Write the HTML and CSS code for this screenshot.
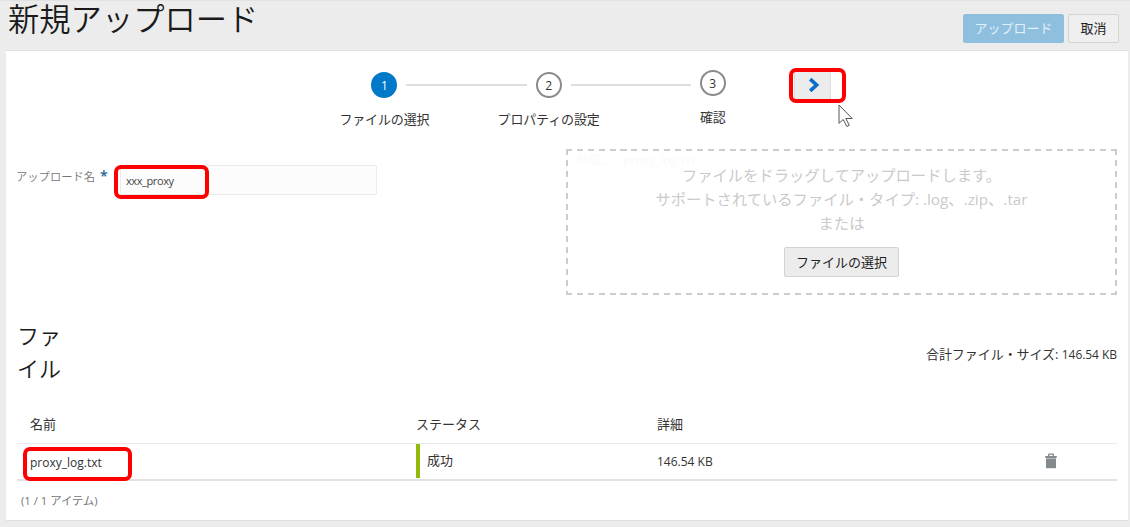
FILE: index.html
```html
<!DOCTYPE html>
<html lang="ja">
<head>
  <meta charset="UTF-8">
  <title>新規アップロード</title>
  <link rel="stylesheet" href="styles.css">
</head>
<body>

  <!-- Header -->
  <header class="header">
    <h1>新規アップロード</h1>
    <div class="actions">
      <button class="btn btn-primary" disabled>アップロード</button>
      <button class="btn btn-cancel">取消</button>
    </div>
  </header>

  <main class="panel">

    <!-- Steps -->
    <div class="train">
      <div class="step active">
        <span class="circle">1</span>
        <span class="step-label">ファイルの選択</span>
      </div>
      <div class="line"></div>
      <div class="step">
        <span class="circle">2</span>
        <span class="step-label">プロパティの設定</span>
      </div>
      <div class="line"></div>
      <div class="step last">
        <span class="circle">3</span>
        <span class="step-label">確認</span>
      </div>
      <div class="next-wrap">
        <button class="next">
          <svg width="12" height="16" viewBox="0 0 12 16"><path d="M2.2 2.2L8.6 8l-6.4 5.8" fill="none" stroke="#0b6fca" stroke-width="3.6"/></svg>
        </button>
        <span class="mark mark-next"></span>
        <svg class="cursor" width="16" height="24" viewBox="0 0 16 24"><path d="M1 1v18.3l4.2-3.8 3.7 7 2.4-1.2-3.5-6.8h6.4z" fill="#fff" stroke="#555" stroke-width="1"/></svg>
      </div>
    </div>

    <!-- Name and drop zone -->
    <div class="form-row">
      <div class="field">
        <label for="upload-name">アップロード名</label>
        <span class="required">*</span>
        <div class="input-wrap">
          <input type="text" id="upload-name" value="xxx_proxy">
          <span class="mark mark-input"></span>
        </div>
      </div>
      <div class="dropzone">
        <div class="native-file"><span>参照...</span><span>proxy_log.txt</span></div>
        <p>ファイルをドラッグしてアップロードします。</p>
        <p>サポートされているファイル・タイプ: .log、.zip、.tar</p>
        <p>または</p>
        <button class="btn btn-select">ファイルの選択</button>
      </div>
    </div>

    <!-- Files -->
    <div class="files-head">
      <h2>ファイル</h2>
      <span class="total">合計ファイル・サイズ: <span class="latin">146.54 KB</span></span>
    </div>

    <table class="files">
      <thead>
        <tr>
          <th class="col-name">名前</th>
          <th class="col-status">ステータス</th>
          <th class="col-detail">詳細</th>
          <th></th>
        </tr>
      </thead>
      <tbody>
        <tr>
          <td class="name">
            <div class="name-wrap">proxy_log.txt<span class="mark mark-file"></span></div>
          </td>
          <td><div class="status">成功</div></td>
          <td><span class="latin">146.54 KB</span></td>
          <td>
            <svg class="trash" width="12" height="16" viewBox="0 0 12 16"><path d="M3 3V1.4Q3 .5 4 .5h4q1 0 1 .9V3h2.7v2H.3V3zM4.4 3h3.2V1.8H4.4z" fill="#858a8d" fill-rule="evenodd"/><path d="M1 5.4h10v9.8H1z" fill="#858a8d"/></svg>
          </td>
        </tr>
      </tbody>
    </table>
    <div class="count">(1 / 1 アイテム)</div>
  </main>

</body>
</html>
```
FILE: styles.css
```css
* {
  box-sizing: border-box;
}

body {
  margin: 0;
  height: 527px;
  overflow: hidden;
  background: #ececec;
  color: #333;
  font-family: "Open Sans", "Noto Sans CJK JP", sans-serif;
  font-size: 13px;
}

h1, h2, p {
  margin: 0;
  font-weight: 350;
}

button, input {
  font-family: inherit;
}

/* Header */
.header {
  display: flex;
  justify-content: space-between;
  height: 50px;
  padding: 0 11px 0 8px;
  border-top: 1px solid #e3e3e3;
}

h1 {
  font-size: 31.3px;
  line-height: 36px;
  color: #1a1a1a;
}

.actions {
  display: flex;
  gap: 4px;
  padding-top: 13px;
}

.btn {
  height: 29px;
  padding: 0;
  border: 1px solid #d3d3d3;
  border-radius: 2px;
  background: #ececec;
  color: #222;
  font-size: 13px;
  line-height: 27px;
}

.btn-primary {
  width: 101px;
  border-color: #8fbfde;
  background: #8fbfde;
  color: #e2f0f8;
}

.btn-cancel {
  width: 51px;
  background: #efefef;
}

/* Panel */
.panel {
  height: 471px;
  margin: 0 2px 0 6px;
  padding: 0 11px;
  border-top: 1px solid #e2e2e2;
  border-bottom: 1px solid #e0e0e0;
  background: #fff;
}

/* Steps */
.train {
  display: flex;
  gap: 9px;
  height: 98px;
  padding: 21px 0 0 354.4px;
}

.step {
  display: flex;
  flex-direction: column;
  align-items: center;
  width: 26px;
  flex-shrink: 0;
}

.last {
  margin-top: -2px;
}

.circle {
  flex-shrink: 0;
  width: 26px;
  height: 26px;
  border: 2px solid #8a8a8a;
  border-radius: 50%;
  font-size: 12px;
  line-height: 24px;
  text-align: center;
}

.active .circle {
  border-color: #0079c8;
  background: #0079c8;
  color: #fff;
}

.step-label {
  margin-top: 11px;
  line-height: 20px;
  white-space: nowrap;
  letter-spacing: -0.15px;
}

.line {
  flex-shrink: 0;
  width: 120.2px;
  height: 2px;
  margin-top: 12px;
  background: #dfdfdf;
}

.next-wrap {
  position: relative;
  margin: -3px 0 0 59.2px;
}

.next {
  display: flex;
  align-items: center;
  justify-content: center;
  width: 37px;
  height: 31px;
  padding: 0 0 0 3px;
  border: 1px solid #dcdcdc;
  background: #ececec;
}

.cursor {
  position: absolute;
  left: 44px;
  top: 35px;
}

/* Red frames */
.mark {
  position: absolute;
  border: 4px solid #f00;
  border-radius: 7px;
  pointer-events: none;
}

.mark-next {
  left: -5px;
  top: -1px;
  width: 57px;
  height: 35px;
}

.mark-input {
  left: -6px;
  top: 0;
  width: 95px;
  height: 34px;
}

.mark-file {
  left: -7px;
  top: -4px;
  width: 109px;
  height: 34px;
}

/* Form */
.form-row {
  display: flex;
  justify-content: space-between;
  height: 146px;
}

.field {
  display: flex;
  align-items: flex-start;
  margin-left: -1px;
  padding-top: 16px;
}

.field label {
  width: 79px;
  color: #757575;
  font-size: 11.3px;
  font-weight: 350;
  line-height: 23px;
  white-space: nowrap;
}

.required {
  width: 25px;
  padding-left: 5px;
  color: #1a6496;
  font-size: 14px;
  font-weight: 600;
  line-height: 22px;
}

.input-wrap {
  position: relative;
}

.input-wrap input {
  display: block;
  width: 257px;
  height: 30px;
  padding: 1px 0 0 5px;
  border: 1px solid #ebebeb;
  border-radius: 2px;
  background: #fcfcfc;
  color: #444;
  font-size: 11px;
  letter-spacing: -0.4px;
}

.dropzone {
  position: relative;
  display: flex;
  flex-direction: column;
  align-items: center;
  width: 551px;
  padding-top: 14px;
  color: #cacaca;
  font-size: 15.3px;
  line-height: 24px;
  background:
    repeating-linear-gradient(90deg, #ccc 0 6px, transparent 6px 10.9px) 0 0 / 100% 2px no-repeat,
    repeating-linear-gradient(90deg, #ccc 0 6px, transparent 6px 10.9px) 0 100% / 100% 2px no-repeat,
    repeating-linear-gradient(#ccc 0 6px, transparent 6px 10.9px) 0 0 / 2px 100% no-repeat,
    repeating-linear-gradient(#ccc 0 6px, transparent 6px 10.9px) 100% 0 / 2px 100% no-repeat;
}

.dropzone p {
  font-weight: 400;
}

.native-file {
  position: absolute;
  left: 10px;
  top: 0;
  display: flex;
  gap: 14px;
  color: #fafafa;
  font-size: 12px;
}

.btn-select {
  width: 115px;
  height: 30px;
  margin-top: 12px;
}

/* Files */
.files-head {
  display: flex;
  justify-content: space-between;
  height: 110px;
  padding-top: 24px;
}

h2 {
  width: 50px;
  color: #1a1a1a;
  font-size: 22px;
  line-height: 33px;
}

.total {
  padding-top: 25px;
  line-height: 20px;
  font-size: 13px;
  letter-spacing: -0.05px;
}

.latin {
  font-size: 12px;
}

.files {
  width: 1100px;
  border-collapse: collapse;
  table-layout: fixed;
}

.files th {
  height: 38px;
  padding: 0;
  border-bottom: 1px solid #ebebeb;
  font-weight: 400;
  text-align: left;
}

.files td {
  height: 37px;
  padding: 0;
  border-bottom: 2px solid #e2e2e2;
}

.files .col-name {
  width: 399px;
  padding-left: 13px;
}

.col-status {
  width: 241px;
}

.col-detail {
  width: 388px;
}

.files .name {
  padding-left: 13px;
}

.name-wrap {
  position: relative;
  padding-top: 3px;
  font-size: 12px;
  line-height: 18px;
}

.status {
  height: 34px;
  padding-left: 7px;
  border-left: 4px solid #92ba0c;
  line-height: 33px;
}

.trash {
  display: block;
}

.count {
  padding: 10px 0 0 4px;
  color: #757575;
  font-size: 11.3px;
  line-height: 20px;
}
```
